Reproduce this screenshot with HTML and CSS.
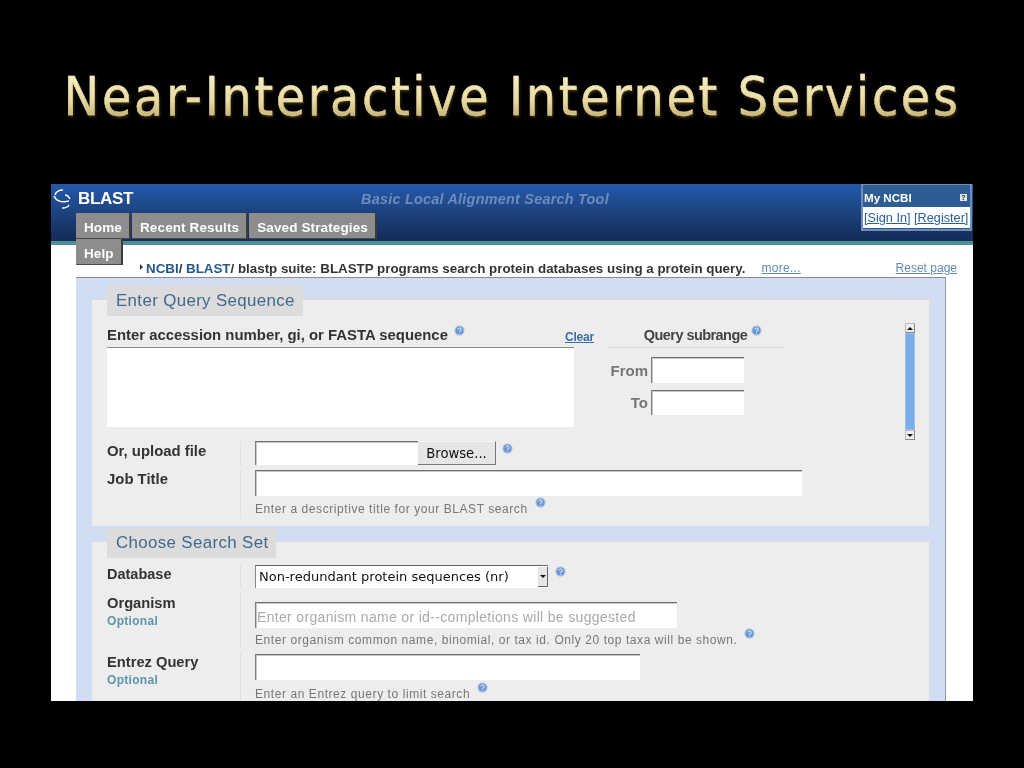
FILE: index.html
```html
<!DOCTYPE html>
<html lang="en">
<head>
<meta charset="utf-8">
<title>Near-Interactive Internet Services</title>
<link rel="stylesheet" href="styles.css">
</head>
<body>
<svg class="defs" width="0" height="0" aria-hidden="true">
  <symbol id="help" viewBox="0 0 12 12">
    <circle cx="6" cy="6" r="5.6" fill="#b4cbe9"/>
    <circle cx="6" cy="6" r="4.4" fill="#6d97d2"/>
    <path d="M4.2 5a1.8 1.6 0 1 1 2.6 1.4c-.6.3-.8.6-.8 1.1" fill="none" stroke="#dfe9f6" stroke-width="1.1"/>
    <circle cx="6" cy="9" r=".6" fill="#dfe9f6"/>
  </symbol>
</svg>
<main class="slide">
  <div class="title-wrap"><h1 class="title">Near-Interactive Internet Services</h1></div>
  <section class="shot">
    <header class="masthead">
      <div class="brand">
        <svg class="logo" viewBox="0 0 20 22" width="20" height="22" aria-hidden="true">
          <path d="M3 7C4 4 7 2 11 2" fill="none" stroke="#fff" stroke-width="1.5"/>
          <path d="M2 8C4 13 10 15 17 13" fill="none" stroke="#fff" stroke-width="1.5"/>
          <path d="M13 7C15 7 17 9 18 11" fill="none" stroke="#fff" stroke-width="1.4"/>
          <path d="M10 20C13 20 16 19 17 17" fill="none" stroke="#fff" stroke-width="1.5"/>
        </svg>
        <span class="brand-name">BLAST</span>
        <span class="tagline">Basic Local Alignment Search Tool</span>
      </div>
      <nav class="tabs">
        <a class="tab">Home</a><a class="tab">Recent Results</a><a class="tab">Saved Strategies</a><a class="tab">Help</a>
      </nav>
      <aside class="myncbi">
        <div class="my-head"><span>My NCBI</span><span class="my-q">?</span></div>
        <div class="my-links"><a>[Sign In]</a> <a>[Register]</a></div>
      </aside>
    </header>

    <div class="crumbs">
      <span class="crumb-arrow"></span>
      <span class="crumb-text"><a>NCBI</a>/ <a>BLAST</a>/ blastp suite: BLASTP programs search protein databases using a protein query.</span>
      <a class="more">more...</a>
      <a class="reset">Reset page</a>
    </div>

    <div class="panel">
      <section class="fieldset first">
        <h2 class="legend">Enter Query Sequence</h2>
        <div class="query">
          <div class="query-left">
            <div class="query-head">
              <span class="label">Enter accession number, gi, or FASTA sequence</span>
              <svg class="help up"><use href="#help"/></svg>
              <a class="clear">Clear</a>
            </div>
            <div class="textarea"></div>
          </div>
          <div class="subrange">
            <div class="sub-head"><span class="sub-title">Query subrange</span><svg class="help up sub-help"><use href="#help"/></svg></div>
            <div class="sub-row"><span class="sub-label">From</span><div class="input sub-input"></div></div>
            <div class="sub-row to"><span class="sub-label">To</span><div class="input sub-input"></div></div>
          </div>
          <div class="scrollbar">
            <span class="sb-btn"><i class="arr-up"></i></span>
            <span class="sb-thumb"></span>
            <span class="sb-btn"><i class="arr-down"></i></span>
          </div>
        </div>
        <div class="row upload-row">
          <div class="row-label"><span class="label">Or, upload file</span></div>
          <div class="row-body inline">
            <div class="input file"></div><div class="browse">Browse...</div>
            <svg class="help up"><use href="#help"/></svg>
          </div>
        </div>
        <div class="row job-row">
          <div class="row-label"><span class="label">Job Title</span></div>
          <div class="row-body">
            <div class="input job"></div>
            <p class="hint">Enter a descriptive title for your BLAST search <svg class="help up"><use href="#help"/></svg></p>
          </div>
        </div>
      </section>

      <section class="fieldset second">
        <h2 class="legend">Choose Search Set</h2>
        <div class="row db-row">
          <div class="row-label"><span class="label">Database</span></div>
          <div class="row-body inline">
            <div class="select"><span>Non-redundant protein sequences (nr)</span><span class="sel-btn"><i class="arr-down"></i></span></div>
            <svg class="help up"><use href="#help"/></svg>
          </div>
        </div>
        <div class="row org-row">
          <div class="row-label"><span class="label big">Organism</span><span class="optional">Optional</span></div>
          <div class="row-body">
            <div class="input org">Enter organism name or id--completions will be suggested</div>
            <p class="hint">Enter organism common name, binomial, or tax id. Only 20 top taxa will be shown. <svg class="help up"><use href="#help"/></svg></p>
          </div>
        </div>
        <div class="row ent-row">
          <div class="row-label"><span class="label big">Entrez Query</span><span class="optional">Optional</span></div>
          <div class="row-body">
            <div class="input ent"></div>
            <p class="hint">Enter an Entrez query to limit search <svg class="help up"><use href="#help"/></svg></p>
          </div>
        </div>
      </section>
    </div>
  </section>
</main>
</body>
</html>
```

FILE: styles.css
```css
* { box-sizing: border-box; }
html, body { margin: 0; padding: 0; background: #000; }
.defs { position: absolute; }
.slide { width: 1024px; height: 768px; background: #000; overflow: hidden; }
.title-wrap { height: 184px; padding-top: 62px; text-align: center; }
.title {
  display: inline-block;
  margin: 0;
  font: 400 53px/70px "DejaVu Sans Condensed", "DejaVu Sans", sans-serif;
  font-stretch: condensed;
  letter-spacing: 2.7px;
  color: transparent;
  background: linear-gradient(180deg, #f8f0c8 15%, #e9dba3 55%, #bfa768 85%);
  -webkit-background-clip: text;
  background-clip: text;
  -webkit-text-stroke: .4px rgba(233, 219, 163, .7);
  filter: drop-shadow(1px 2px 1px rgba(110, 90, 40, .45));
}

.shot {
  width: 922px; height: 517px; margin-left: 51px;
  background: #fff; overflow: hidden; position: relative;
  font-family: "Liberation Sans", Arial, sans-serif;
  filter: blur(.45px);
}

.masthead {
  height: 61px;
  background: linear-gradient(180deg, #2459ab 0, #1f4a8c 35%, #152f5b 92%);
  border-bottom: 4px solid #4f8f99;
  position: relative;
}
.brand { height: 29px; display: flex; align-items: center; color: #fff; }
.logo { margin: 0 0 0 1px; flex: none; }
.brand-name { margin-left: 6px; font-size: 17px; font-weight: 700; letter-spacing: -.3px; width: 283px; }
.tagline { font-size: 14.4px; font-weight: 700; font-style: italic; color: #6c8dbf; letter-spacing: .25px; }
.tabs { display: flex; flex-wrap: wrap; width: 310px; margin-left: 25px; position: relative; z-index: 2; }
.tab {
  height: 26px; padding: 0 7px 0 8px; margin-right: 1px;
  background: #8f8d8c; color: #fff; font-size: 13.5px; font-weight: 700; line-height: 29px; letter-spacing: .12px;
  border-right: 2px solid #3c3c3c; border-bottom: 1px solid #4a4a4a;
}
.myncbi {
  position: absolute; top: 0; right: 1px; width: 111px; height: 47px;
  background: #2e5d96; border: 2px solid #6f8fb5; border-width: 1px 2px 2px 2px;
  color: #fff; font-size: 11.6px;
}
.my-head { height: 22px; display: flex; align-items: center; justify-content: space-between; padding: 3px 3px 0 1px; font-weight: 700; }
.my-q { width: 7px; height: 7px; background: #e4e4e4; color: #223; font-size: 7px; line-height: 7px; text-align: center; }
.my-links { height: 21px; background: #fff; color: #2a6099; font-size: 12.7px; line-height: 22px; padding-left: 1px; white-space: nowrap; }
.my-links a { text-decoration: underline; }

.crumbs { height: 32px; display: flex; align-items: flex-start; padding: 16px 16px 0 89px; white-space: nowrap; position: relative; }
.crumb-arrow { width: 0; height: 0; margin: 3px 3px 0 0; border-left: 3px solid #333; border-top: 3px solid transparent; border-bottom: 3px solid transparent; }
.crumb-text { font-size: 13.35px; line-height: 15px; font-weight: 700; color: #333; }
.crumb-text a { color: #23598f; }
.more { margin-left: 16px; font-size: 12px; line-height: 15px; color: #5f8db5; text-decoration: underline; letter-spacing: .3px; }
.reset { margin-left: auto; font-size: 12px; line-height: 15px; color: #5f8db5; text-decoration: underline; }

.panel {
  width: 870px; height: 424px; padding: 21px 15px 0 16px; margin-left: 25px;
  background: #d0ddf3; border-top: 1px solid #8a8a8a; border-right: 1px solid #8f9aa8;
}
.fieldset { background: #eeeded; padding-left: 15px; border-top: 1px solid #dcdcdc; border-right: 1px solid #dcdcdc; }
.first { height: 227px; margin-bottom: 15px; }
.second { height: 200px; }
.legend {
  margin: -15px 0 0; height: 31px; width: fit-content; padding: 0 8px 0 9px;
  background: #dcdcdc; color: #41688f; font-size: 16.9px; font-weight: 400; line-height: 32px; letter-spacing: .35px;
}
.second .legend { margin-top: -14px; height: 30px; line-height: 30px; }
.label { font-size: 14.9px; font-weight: 700; color: #333; }
.label.big { font-size: 14.7px; }
.db-row .label { font-size: 14.5px; }
.help { width: 11px; height: 11px; flex: none; }
.help.up { position: relative; top: -5px; margin-left: 6px; }
.help.sub-help { margin-left: 4px; }
.hint .help.up { margin-left: 3px; }

.query { display: flex; height: 118px; margin-top: 7px; }
.query-left { width: 487px; flex: none; }
.query-head { height: 24px; display: flex; align-items: center; }
.clear { margin-left: auto; font-size: 12px; font-weight: 700; color: #3a6ea5; text-decoration: underline; margin-top: 3px; letter-spacing: -.2px; }
.textarea { width: 467px; height: 80px; background: #fff; border-top: 1px solid #8a8a8a; }
.subrange { width: 176px; margin-left: 14px; flex: none; }
.sub-head { height: 25px; display: flex; align-items: center; justify-content: center; border-bottom: 1px solid #d6d6d6; padding-left: 14px; }
.sub-title { font-size: 14.5px; font-weight: 700; color: #444; letter-spacing: -.55px; }
.sub-row { display: flex; justify-content: flex-end; align-items: center; width: 136px; height: 26px; margin-top: 9px; }
.sub-row.to { margin-top: 7px; height: 25px; }
.sub-label { font-size: 15px; font-weight: 700; color: #777; margin-right: 3px; }
.input { background: #fff; border-top: 1px solid #6f6f6f; border-left: 1px solid #7f7f7f; box-shadow: inset 1px 1px 0 #c8c8c8; }
.sub-input { width: 93px; height: 100%; flex: none; }
.scrollbar { width: 10px; height: 117px; margin-left: 121px; display: flex; flex-direction: column; flex: none; }
.sb-btn { height: 10px; background: #eee; border: 1px solid #bbb; border-right-color: #888; border-bottom-color: #888; display: flex; align-items: center; justify-content: center; flex: none; }
.sb-thumb { flex: 1; background: #7badea; border: 1px solid #9bbfe8; }
.arr-up, .arr-down { display: block; width: 0; height: 0; border-left: 3px solid transparent; border-right: 3px solid transparent; }
.arr-up { border-bottom: 3px solid #111; }
.arr-down { border-top: 3px solid #111; }

.row { display: grid; grid-template-columns: 133px 1fr; }
.row-label { display: flex; flex-direction: column; }
.row-body { border-left: 1px solid #e0e0e0; padding-left: 14px; }
.row-body.inline { display: flex; align-items: center; }
.upload-row { height: 24px; }
.job-row { height: 48px; margin-top: 5px; }
.file { width: 163px; height: 24px; }
.browse {
  width: 78px; height: 24px; background: #e6e6e6; color: #111;
  font: 13.2px/23px "DejaVu Sans", sans-serif; text-align: center;
  border-right: 1px solid #777; border-bottom: 1px solid #777; border-top: 1px solid #f5f5f5;
}
.job { width: 547px; height: 26px; }
.hint { margin: 0; font-size: 12px; color: #777; letter-spacing: .57px; white-space: nowrap; }
.job-row .hint { margin-top: 5px; line-height: 17px; }
.job-row .label { line-height: 18px; }
.upload-row .label { line-height: 20px; }
.db-row { height: 23px; margin-top: 7px; }
.db-row .label { line-height: 19px; }
.select {
  width: 293px; height: 23px; background: #fff; display: flex; align-items: center; justify-content: space-between;
  border-top: 1px solid #666; border-left: 1px solid #888; padding: 0 0 0 3px;
  font: 13px/20px "DejaVu Sans", sans-serif; color: #111;
}
.sel-btn { width: 10px; height: 20px; background: #e6e6e6; border-right: 1px solid #666; border-bottom: 1px solid #666; display: flex; align-items: center; justify-content: center; }
.db-row .help.up { margin-left: 7px; }
.org-row { height: 56px; margin-top: 4px; }
.org-row .row-body { padding-top: 10px; }
.org { width: 422px; height: 26px; color: #aaa; font-size: 14px; line-height: 28px; white-space: nowrap; padding-left: 1px; letter-spacing: .33px; }
.org-row .hint { margin-top: 4px; line-height: 16px; }
.ent-row { height: 60px; margin-top: 4px; }
.ent-row .row-body { padding-top: 2px; }
.ent { width: 385px; height: 26px; }
.ent-row .hint { margin-top: 6px; line-height: 16px; }
.org-row .row-label { padding-top: 3px; }
.ent-row .row-label { padding-top: 2px; }
.optional { font-size: 12px; font-weight: 700; color: #5b95ae; line-height: 17px; letter-spacing: .3px; margin-top: 2px; }
```
